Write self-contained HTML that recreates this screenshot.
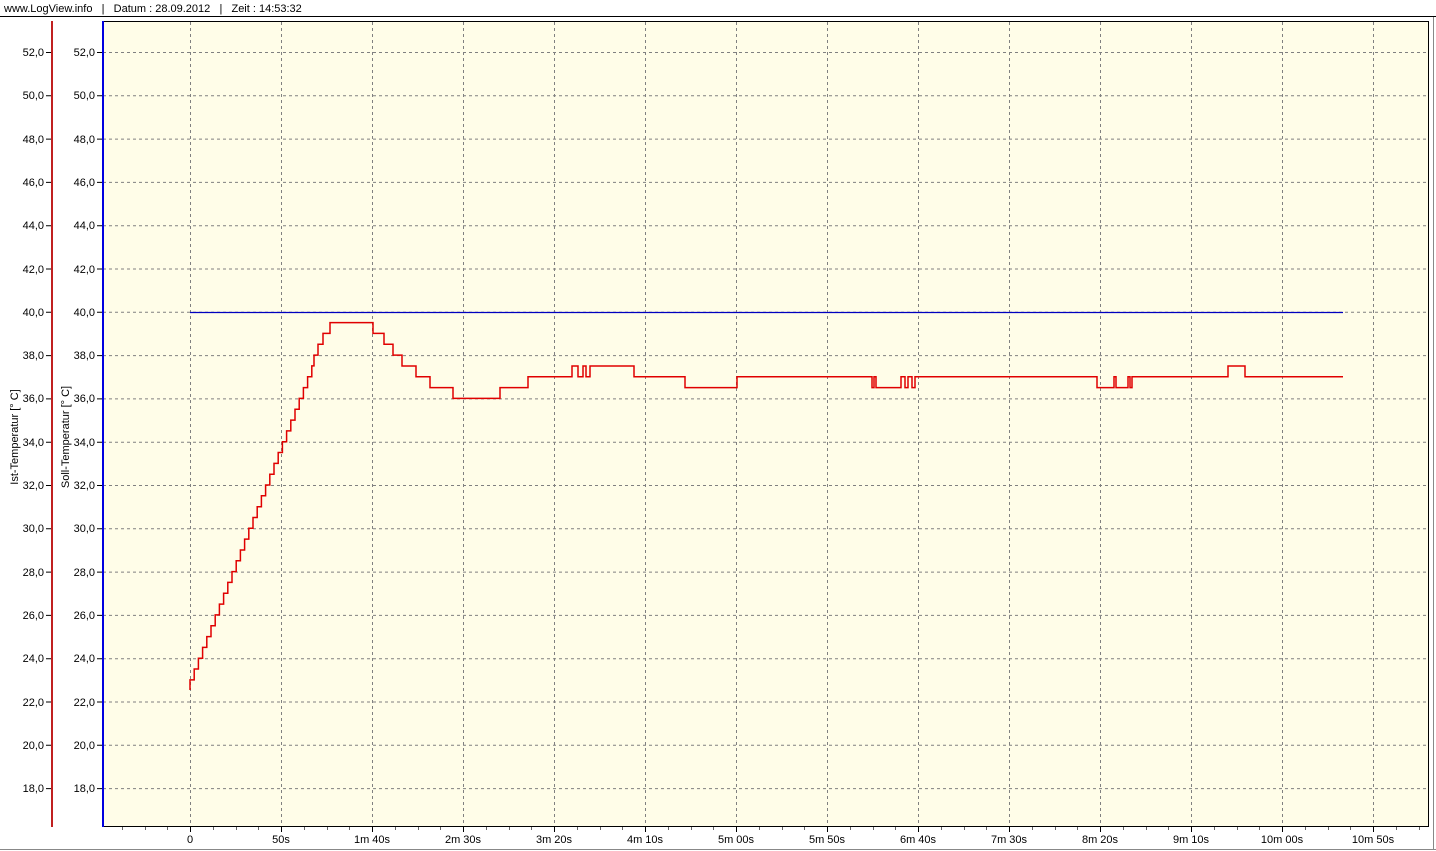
<!DOCTYPE html>
<html><head><meta charset="utf-8"><style>
html,body{margin:0;padding:0;background:#fff;overflow:hidden}
svg{display:block;font-family:"Liberation Sans",sans-serif;font-size:11px}
</style></head><body>
<svg width="1436" height="851" viewBox="0 0 1436 851" xmlns="http://www.w3.org/2000/svg">
<rect width="1436" height="851" fill="#fff"/>
<text x="4" y="12" fill="#000" style="white-space:pre" xml:space="preserve">www.LogView.info   |   Datum : 28.09.2012   |   Zeit : 14:53:32</text>
<line x1="0" y1="16.5" x2="1436" y2="16.5" stroke="#000"/>
<line x1="1433.5" y1="17" x2="1433.5" y2="849" stroke="#888"/>
<line x1="0" y1="849.5" x2="1436" y2="849.5" stroke="#888"/>
<rect x="103" y="21" width="1325" height="805" fill="#fffde8"/>
<line x1="102" y1="21.5" x2="1428" y2="21.5" stroke="#000"/>
<line x1="1428.5" y1="21" x2="1428.5" y2="826" stroke="#000"/>
<line x1="102" y1="826.5" x2="1429" y2="826.5" stroke="#000"/>
<g stroke="#808080" stroke-dasharray="3,3" stroke-width="1">
<path d="M103,52.5H1428M103,95.8H1428M103,139.1H1428M103,182.4H1428M103,225.7H1428M103,269H1428M103,312.3H1428M103,355.6H1428M103,398.9H1428M103,442.2H1428M103,485.5H1428M103,528.8H1428M103,572.1H1428M103,615.4H1428M103,658.7H1428M103,702H1428M103,745.3H1428M103,788.6H1428"/>
<path d="M190.5,22V826M281.5,22V826M372.5,22V826M463.5,22V826M554.5,22V826M645.5,22V826M736.5,22V826M827.5,22V826M918.5,22V826M1009.5,22V826M1100.5,22V826M1191.5,22V826M1282.5,22V826M1373.5,22V826"/>
</g>
<rect x="51" y="21" width="2" height="806" fill="#c02020"/>
<rect x="102" y="21" width="2" height="806" fill="#0000e0"/>
<g stroke="#000">
<path d="M46,52.5H51M46,95.8H51M46,139.1H51M46,182.4H51M46,225.7H51M46,269H51M46,312.3H51M46,355.6H51M46,398.9H51M46,442.2H51M46,485.5H51M46,528.8H51M46,572.1H51M46,615.4H51M46,658.7H51M46,702H51M46,745.3H51M46,788.6H51"/>
<path d="M97,52.5H102M97,95.8H102M97,139.1H102M97,182.4H102M97,225.7H102M97,269H102M97,312.3H102M97,355.6H102M97,398.9H102M97,442.2H102M97,485.5H102M97,528.8H102M97,572.1H102M97,615.4H102M97,658.7H102M97,702H102M97,745.3H102M97,788.6H102"/>
<path d="M190.5,827v5M281.5,827v5M372.5,827v5M463.5,827v5M554.5,827v5M645.5,827v5M736.5,827v5M827.5,827v5M918.5,827v5M1009.5,827v5M1100.5,827v5M1191.5,827v5M1282.5,827v5M1373.5,827v5" />
</g>
<g stroke="#666">
<path d="M122.5,827v3M145.5,827v3M167.5,827v3M213.5,827v3M236.5,827v3M258.5,827v3M304.5,827v3M327.5,827v3M349.5,827v3M395.5,827v3M418.5,827v3M440.5,827v3M486.5,827v3M509.5,827v3M531.5,827v3M577.5,827v3M600.5,827v3M622.5,827v3M668.5,827v3M691.5,827v3M713.5,827v3M759.5,827v3M782.5,827v3M804.5,827v3M850.5,827v3M873.5,827v3M895.5,827v3M941.5,827v3M964.5,827v3M986.5,827v3M1032.5,827v3M1055.5,827v3M1077.5,827v3M1123.5,827v3M1146.5,827v3M1168.5,827v3M1214.5,827v3M1237.5,827v3M1259.5,827v3M1305.5,827v3M1328.5,827v3M1350.5,827v3M1396.5,827v3M1419.5,827v3"/>
</g>
<g fill="#000" text-anchor="end">
<text x="44" y="56">52,0</text><text x="44" y="99">50,0</text><text x="44" y="143">48,0</text><text x="44" y="186">46,0</text><text x="44" y="229">44,0</text><text x="44" y="273">42,0</text><text x="44" y="316">40,0</text><text x="44" y="359">38,0</text><text x="44" y="402">36,0</text><text x="44" y="446">34,0</text><text x="44" y="489">32,0</text><text x="44" y="532">30,0</text><text x="44" y="576">28,0</text><text x="44" y="619">26,0</text><text x="44" y="662">24,0</text><text x="44" y="706">22,0</text><text x="44" y="749">20,0</text><text x="44" y="792">18,0</text>
<text x="95" y="56">52,0</text><text x="95" y="99">50,0</text><text x="95" y="143">48,0</text><text x="95" y="186">46,0</text><text x="95" y="229">44,0</text><text x="95" y="273">42,0</text><text x="95" y="316">40,0</text><text x="95" y="359">38,0</text><text x="95" y="402">36,0</text><text x="95" y="446">34,0</text><text x="95" y="489">32,0</text><text x="95" y="532">30,0</text><text x="95" y="576">28,0</text><text x="95" y="619">26,0</text><text x="95" y="662">24,0</text><text x="95" y="706">22,0</text><text x="95" y="749">20,0</text><text x="95" y="792">18,0</text>
</g>
<g fill="#000" text-anchor="middle">
<text x="190" y="843">0</text><text x="281" y="843">50s</text><text x="372" y="843">1m 40s</text><text x="463" y="843">2m 30s</text><text x="554" y="843">3m 20s</text><text x="645" y="843">4m 10s</text><text x="736" y="843">5m 00s</text><text x="827" y="843">5m 50s</text><text x="918" y="843">6m 40s</text><text x="1009" y="843">7m 30s</text><text x="1100" y="843">8m 20s</text><text x="1191" y="843">9m 10s</text><text x="1282" y="843">10m 00s</text><text x="1373" y="843">10m 50s</text>
<text transform="translate(18,437) rotate(-90)">Ist-Temperatur [° C]</text>
<text transform="translate(69,437) rotate(-90)">Soll-Temperatur [° C]</text>
</g>
<line x1="190" y1="312.5" x2="1343" y2="312.5" stroke="#0000c0" stroke-width="1.2"/>
<path fill="none" stroke="#e00000" stroke-width="1.5" d="M190,690V679.9H194.2V669H198.4V658.2H202.6V647.4H206.8V636.6H211V625.7H215.2V614.9H219.4V604.1H223.6V593.3H227.8V582.4H232V571.6H236.2V560.8H240.4V550H244.6V539.1H248.8V528.3H253V517.5H257.2V506.7H261.4V495.8H265.6V485H269.8V474.2H274V463.4H278.2V452.5H282.4V441.7H286.6V430.9H290.8V420.1H295V409.2H299.2V398.4H303.4V387.6H307.6V376.8H311.8V365.9H314V355.1H318V344.3H323V333.4H330V322.6H373V333.4H384V344.3H393V355.1H402V366H416V376.8H430V387.6H453V398.4H500V387.6H528V376.8H572V366H578V376.8H583V366H586V376.8H590V366H634V376.8H685V387.6H737V376.8H872V387.6H874V376.8H876V387.6H901V376.8H905V387.6H908V376.8H912V387.6H915V376.8H1097V387.6H1114V376.8H1116V387.6H1128V376.8H1130V387.6H1132V376.8H1228V366H1245V376.8H1343"/>
</svg>
</body></html>
